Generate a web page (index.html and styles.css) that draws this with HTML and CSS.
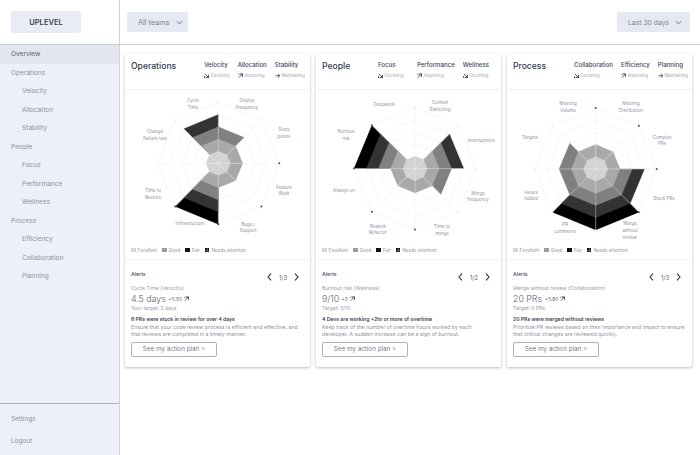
FILE: index.html
```html
<!DOCTYPE html>
<html lang="en">
<head>
<meta charset="utf-8">
<title>Uplevel</title>
<link rel="stylesheet" href="styles.css">
</head>
<body>
<svg class="defs" width="0" height="0" aria-hidden="true">
  <symbol id="i-down" viewBox="0 0 6 6"><path d="M1 1L5 5M5 1.8V5H1.8M0.6 3.4V5.4" fill="none" stroke="#22283a" stroke-width="0.9"/></symbol>
  <symbol id="i-up" viewBox="0 0 6 6"><path d="M1 5L5 1M1.8 1H5V4.2M0.8 1V2" fill="none" stroke="#22283a" stroke-width="0.9"/></symbol>
  <symbol id="i-flat" viewBox="0 0 6 6"><path d="M0.6 3H5.2M3.2 1L5.2 3L3.2 5" fill="none" stroke="#22283a" stroke-width="0.8"/></symbol>
  <symbol id="i-chev" viewBox="0 0 10 6"><path d="M1 0.8L5 5L9 0.8" fill="none" stroke="currentColor" stroke-width="1"/></symbol>
  <symbol id="i-left" viewBox="0 0 5 8"><path d="M4 0.6L1 4L4 7.4" fill="none" stroke="currentColor" stroke-width="1.1"/></symbol>
  <symbol id="i-right" viewBox="0 0 5 8"><path d="M1 0.6L4 4L1 7.4" fill="none" stroke="currentColor" stroke-width="1.1"/></symbol>
</svg>
<div class="app">
  <aside class="sidebar">
    <div class="brand"><div class="logo">UPLEVEL</div></div>
    <nav class="nav">
      <a class="nav-item active">Overview</a>
      <a class="nav-item">Operations</a>
      <a class="nav-item sub">Velocity</a>
      <a class="nav-item sub">Allocation</a>
      <a class="nav-item sub">Stability</a>
      <a class="nav-item">People</a>
      <a class="nav-item sub">Focus</a>
      <a class="nav-item sub">Performance</a>
      <a class="nav-item sub">Wellness</a>
      <a class="nav-item">Process</a>
      <a class="nav-item sub">Efficiency</a>
      <a class="nav-item sub">Collaboration</a>
      <a class="nav-item sub">Planning</a>
    </nav>
    <div class="side-foot">
      <a class="foot-item">Settings</a>
      <a class="foot-item">Logout</a>
    </div>
  </aside>
  <main class="main">
    <header class="topbar">
      <button class="select select-teams">All teams <svg class="chev"><use href="#i-chev"/></svg></button>
      <button class="select select-range">Last 30 days <svg class="chev"><use href="#i-chev"/></svg></button>
    </header>
    <div class="cards">

      <section class="card">
        <div class="card-head">
          <h2 class="card-title">Operations</h2>
          <div class="metric"><div class="metric-name">Velocity</div><div class="metric-status"><svg class="trend"><use href="#i-down"/></svg>Declining</div></div>
          <div class="metric"><div class="metric-name">Allocation</div><div class="metric-status"><svg class="trend"><use href="#i-up"/></svg>Improving</div></div>
          <div class="metric"><div class="metric-name">Stability</div><div class="metric-status"><svg class="trend"><use href="#i-flat"/></svg>Maintaining</div></div>
        </div>
        <div class="chart">
          <svg class="radar" viewBox="125 90 185 155">
            <g class="radar-shape" data-cx="218.3" data-cy="163.3" data-levels="3,2,2,2,5,1,1,4" data-dots="2,3,4,5"></g>
            <g class="radar-labels">
              <text x="193" y="102">Cycle</text><text x="193" y="108.5">Time</text>
              <text x="247" y="102">Deploy</text><text x="247" y="108.5">Frequency</text>
              <text x="284" y="131">Story</text><text x="284" y="138">points</text>
              <text x="155" y="133">Change</text><text x="155" y="140">Failure rate</text>
              <text x="284" y="188.5">Feature</text><text x="284" y="195">Work</text>
              <text x="153" y="192">Time to</text><text x="153" y="199">Restore</text>
              <text x="190" y="225">Infrastructure</text>
              <text x="248" y="225.5">Bugs /</text><text x="248" y="232">Support</text>
            </g>
          </svg>
          <div class="legend">
            <span class="key"><i class="swatch excellent"></i>Excellent</span>
            <span class="key"><i class="swatch good"></i>Good</span>
            <span class="key"><i class="swatch fair"></i>Fair</span>
            <span class="key"><i class="swatch attention"></i>Needs attention</span>
          </div>
        </div>
        <div class="alerts">
          <div class="alerts-head">
            <span class="alerts-title">Alerts</span>
            <div class="pager"><svg class="pager-arrow"><use href="#i-left"/></svg><span>1/3</span><svg class="pager-arrow"><use href="#i-right"/></svg></div>
          </div>
          <div class="alert-name">Cycle Time (Velocity)</div>
          <div class="alert-value">4.5 days <small>+%50</small><svg class="trend"><use href="#i-up"/></svg></div>
          <div class="alert-target">Your target: 2 days</div>
          <div class="alert-headline">8 PRs were stuck in review for over 4 days</div>
          <p class="alert-text">Ensure that your code review process is efficient and effective, and<br>that reviews are completed in a timely manner.</p>
          <button class="action">See my action plan &gt;</button>
        </div>
      </section>

      <section class="card">
        <div class="card-head card-head-people">
          <h2 class="card-title">People</h2>
          <div class="metric metric-focus"><div class="metric-name">Focus</div><div class="metric-status"><svg class="trend"><use href="#i-down"/></svg>Declining</div></div>
          <div class="metric"><div class="metric-name">Performance</div><div class="metric-status"><svg class="trend"><use href="#i-up"/></svg>Improving</div></div>
          <div class="metric"><div class="metric-name">Wellness</div><div class="metric-status"><svg class="trend"><use href="#i-down"/></svg>Declining</div></div>
        </div>
        <div class="chart">
          <svg class="radar" viewBox="316 90 185 155">
            <g class="radar-shape" data-cx="415" data-cy="168.5" data-levels="1,4,3,2,2,2,5,1" data-dots="4,5,6,7"></g>
            <g class="radar-labels">
              <text x="384" y="106">Deepwork</text>
              <text x="440" y="104">Context</text><text x="440" y="110.5">Switching</text>
              <text x="481" y="142">Interruptions</text>
              <text x="346" y="133">Burnout</text><text x="346" y="140">risk</text>
              <text x="344" y="192">Always on</text>
              <text x="478" y="195">Merge</text><text x="478" y="201">frequency</text>
              <text x="378" y="228">Rework</text><text x="378" y="234">Refactor</text>
              <text x="442" y="228">Time to</text><text x="442" y="235">merge</text>
            </g>
          </svg>
          <div class="legend">
            <span class="key"><i class="swatch excellent"></i>Excellent</span>
            <span class="key"><i class="swatch good"></i>Good</span>
            <span class="key"><i class="swatch fair"></i>Fair</span>
            <span class="key"><i class="swatch attention"></i>Needs attention</span>
          </div>
        </div>
        <div class="alerts">
          <div class="alerts-head">
            <span class="alerts-title">Alerts</span>
            <div class="pager"><svg class="pager-arrow"><use href="#i-left"/></svg><span>1/2</span><svg class="pager-arrow"><use href="#i-right"/></svg></div>
          </div>
          <div class="alert-name">Burnout risk (Wellness)</div>
          <div class="alert-value">9/10 <small>+3</small><svg class="trend"><use href="#i-up"/></svg></div>
          <div class="alert-target">Target: 5/10</div>
          <div class="alert-headline">4 Devs are working +2hr or more of overtime</div>
          <p class="alert-text">Keep track of the number of overtime hours worked by each<br>developer. A sudden increase can be a sign of burnout.</p>
          <button class="action">See my action plan &gt;</button>
        </div>
      </section>

      <section class="card">
        <div class="card-head card-head-process">
          <h2 class="card-title">Process</h2>
          <div class="metric"><div class="metric-name">Collaboration</div><div class="metric-status"><svg class="trend"><use href="#i-down"/></svg>Declining</div></div>
          <div class="metric"><div class="metric-name">Efficiency</div><div class="metric-status"><svg class="trend"><use href="#i-up"/></svg>Improving</div></div>
          <div class="metric"><div class="metric-name">Planning</div><div class="metric-status"><svg class="trend"><use href="#i-flat"/></svg>Maintaining</div></div>
        </div>
        <div class="chart">
          <svg class="radar" viewBox="507 90 185 155">
            <g class="radar-shape" data-cx="595.7" data-cy="169" data-levels="2,2,4,5,5,3,3,2" data-dots="0,1,2,3"></g>
            <g class="radar-labels">
              <text x="568" y="105">Meeting</text><text x="568" y="112">Volume</text>
              <text x="631" y="105">Meeting</text><text x="631" y="112">Distribution</text>
              <text x="662" y="139">Complex</text><text x="662" y="145">PRs</text>
              <text x="530" y="139">Targets</text>
              <text x="664" y="199.5">Stuck PRs</text>
              <text x="531" y="194">Issues</text><text x="531" y="200">Added</text>
              <text x="565" y="226">PR</text><text x="565" y="233">comments</text>
              <text x="630" y="225">Merge</text><text x="630" y="232">without</text><text x="630" y="239">review</text>
            </g>
          </svg>
          <div class="legend">
            <span class="key"><i class="swatch excellent"></i>Excellent</span>
            <span class="key"><i class="swatch good"></i>Good</span>
            <span class="key"><i class="swatch fair"></i>Fair</span>
            <span class="key"><i class="swatch attention"></i>Needs attention</span>
          </div>
        </div>
        <div class="alerts">
          <div class="alerts-head">
            <span class="alerts-title">Alerts</span>
            <div class="pager"><svg class="pager-arrow"><use href="#i-left"/></svg><span>1/3</span><svg class="pager-arrow"><use href="#i-right"/></svg></div>
          </div>
          <div class="alert-name">Merge without review (Collaboration)</div>
          <div class="alert-value">20 PRs <small>+%80</small><svg class="trend"><use href="#i-up"/></svg></div>
          <div class="alert-target">Target: 5 PRs</div>
          <div class="alert-headline">20 PRs were merged without reviews</div>
          <p class="alert-text">Prioritize PR reviews based on their importance and impact to ensure<br>that critical changes are reviewed quickly.</p>
          <button class="action">See my action plan &gt;</button>
        </div>
      </section>

    </div>
  </main>
</div>
<script src="app.js"></script>
</body>
</html>
```
FILE: styles.css
```css
* { box-sizing: border-box; }
html, body { margin: 0; padding: 0; height: 100%; }
body { font-family: Inter, "Liberation Sans", sans-serif; color: #8b90a1; background: #fff; overflow: hidden; }
.defs { position: absolute; }
.app { display: flex; height: 455px; }

.sidebar { width: 120px; flex: none; display: flex; flex-direction: column; border-right: 1.5px solid #cfd2d9; }
.brand { height: 45px; flex: none; padding: 11px; border-bottom: 1.5px solid #c9ccd2; }
.logo { width: 70px; height: 22px; background: #e9ecf5; border-radius: 2px; display: flex; align-items: center; justify-content: center; font-size: 7.4px; font-weight: 600; color: #3a3f4d; letter-spacing: .1px; }
.nav { flex: 1; background: #edf0f9; }
.nav-item { display: block; height: 18.5px; line-height: 18.5px; padding-left: 11px; font-size: 6.6px; color: #8e92a1; }
.nav-item.sub { padding-left: 22px; }
.nav-item.active { background: #e3e6ef; color: #595e6e; }
.side-foot { flex: none; height: 52px; padding-top: 4px; background: #edf0f9; border-top: 1px solid #aeb1b8; }
.foot-item { display: block; height: 22px; line-height: 22px; padding-left: 11px; font-size: 6.4px; color: #8e92a1; }

.main { flex: 1; min-width: 0; }
.topbar { height: 45px; display: flex; justify-content: space-between; padding: 12px 10px 12px 7px; border-bottom: 1.5px solid #c9ccd2; }
.select { height: 20px; border: 0; border-radius: 2px; background: #e6e9f3; color: #7d8294; font: 400 6.8px Inter, sans-serif; display: flex; align-items: center; padding: 0 0 0 11px; }
.select-teams { width: 61px; font-size: 7.3px; }
.select-range { width: 73px; }
.chev { width: 7px; height: 5px; margin-left: 6px; color: #4a4f60; }
.select-range .chev { margin-left: 6px; }

.cards { display: flex; gap: 6px; padding: 9px 0 0 5px; }
.card { width: 185px; height: 313px; flex: none; background: #fff; border-radius: 2px; box-shadow: 0 1px 3px rgba(60,60,70,.35); }
.card-head { height: 36px; display: flex; align-items: flex-start; gap: 8px; padding: 7px 5px 0 6px; border-bottom: 1px solid #f1f2f5; }
.card-head-people { padding-right: 12px; }
.card-head-process { padding-right: 4px; }
.card-title { margin: 0 auto 0 0; font-size: 8.6px; line-height: 10px; font-weight: 500; color: #2e3a52; }
.metric-focus { width: 31px; }
.metric-name { font-size: 6.1px; line-height: 8px; font-weight: 500; color: #3e4660; white-space: nowrap; }
.metric-status { display: flex; align-items: center; margin-top: 4px; font-size: 4.3px; line-height: 6px; color: #a0a4b2; white-space: nowrap; }
.trend { width: 5.5px; height: 5.5px; margin-right: 1.2px; flex: none; }

.chart { height: 170px; border-bottom: 1px solid #f1f2f5; }
.radar { display: block; width: 185px; height: 155px; }
.radar-labels text { font-size: 4.5px; fill: #8d91a4; text-anchor: middle; }
.legend { display: flex; padding: 0 6px; gap: 5px; height: 10px; align-items: center; font-size: 4.6px; color: #9195a5; }
.key { display: flex; align-items: center; }
.swatch { width: 4.5px; height: 4.5px; margin-right: 2px; }
.excellent { background: #d6d6d6; }
.good { background: #9c9c9c; }
.fair { background: linear-gradient(#111 40%, #777 40%, #777 60%, #111 60%); }
.attention { background: linear-gradient(#555, #555) center / 1px 100% no-repeat, linear-gradient(#555, #555) center / 100% 1px no-repeat, #111; }

.alerts { padding: 11px 6px 0; }
.alerts-head { height: 13px; display: flex; justify-content: space-between; }
.alerts-title { font-size: 5.2px; line-height: 7px; font-weight: 500; color: #4a5068; }
.pager { display: flex; align-items: center; height: 12px; gap: 7px; padding-right: 5px; font-size: 5.8px; color: #5b6072; }
.pager-arrow { width: 5px; height: 8px; color: #2a2f40; }
.alert-name { font-size: 5.25px; line-height: 9px; color: #9a9eae; }
.alert-value { display: flex; align-items: center; height: 11px; font-size: 8.8px; font-weight: 300; color: #5a5f72; white-space: pre; }
.alert-value small { font-size: 4.8px; font-weight: 400; margin-right: 2px; }
.alert-target { font-size: 5.1px; line-height: 8px; color: #9a9eae; }
.alert-headline { margin-top: 3px; font-size: 5.1px; line-height: 8px; font-weight: 600; color: #3c4154; }
.alert-text { margin: 1px 0 0; font-size: 5.25px; line-height: 7px; color: #9094a4; white-space: nowrap; }
.action { display: block; margin-top: 3.5px; width: 86px; height: 15px; padding: 0; background: #fff; border: 1px solid #aeb2bd; border-radius: 2px; font: 400 6.3px Inter, sans-serif; color: #777c8d; }
```
FILE: app.js
```js
// Draws each radar: one wedge per pair of neighbouring axes, filled up to its level.
var NS = 'http://www.w3.org/2000/svg';
var STEP = 12.2;
var BANDS = ['#d2d2d2', '#a9a9a9', '#808080', '#333333', '#000000'];

function point(cx, cy, axis, radius) {
  var a = axis * Math.PI / 4;
  return [cx + Math.sin(a) * radius, cy - Math.cos(a) * radius];
}
function add(parent, tag, attrs) {
  var el = document.createElementNS(NS, tag);
  Object.keys(attrs).forEach(function (k) { el.setAttribute(k, attrs[k]); });
  parent.appendChild(el);
}
function ring(cx, cy, radius) {
  var pts = [];
  for (var i = 0; i < 8; i++) pts.push(point(cx, cy, i, radius).join(','));
  return pts.join(' ');
}

document.querySelectorAll('.radar-shape').forEach(function (g) {
  var cx = +g.dataset.cx, cy = +g.dataset.cy;
  var levels = g.dataset.levels.split(',').map(Number);
  var dots = g.dataset.dots.split(',').map(Number);
  var i, k;

  for (k = 1; k <= 5; k++) {
    add(g, 'polygon', { points: ring(cx, cy, STEP * k), fill: 'none', stroke: '#eceef6', 'stroke-width': 0.6 });
  }
  for (i = 0; i < 8; i++) {
    var end = point(cx, cy, i, STEP * 5);
    add(g, 'line', { x1: cx, y1: cy, x2: end[0], y2: end[1], stroke: '#eceef6', 'stroke-width': 0.6 });
  }
  for (k = 5; k >= 1; k--) {
    for (i = 0; i < 8; i++) {
      if (levels[i] < k) continue;
      var a = point(cx, cy, i, STEP * k), b = point(cx, cy, i + 1, STEP * k);
      add(g, 'polygon', {
        points: cx + ',' + cy + ' ' + a.join(',') + ' ' + b.join(','),
        fill: BANDS[k - 1], stroke: BANDS[k - 1], 'stroke-width': 0.2
      });
    }
  }
  for (i = 0; i < 8; i++) {
    var tip = point(cx, cy, i, STEP * 5);
    add(g, 'line', { x1: cx, y1: cy, x2: tip[0], y2: tip[1], stroke: '#ffffff', 'stroke-opacity': 0.55, 'stroke-width': 0.7 });
    var on = dots.indexOf(i) >= 0;
    add(g, 'circle', { cx: tip[0], cy: tip[1], r: on ? 1 : 0.8, fill: on ? '#3c4a80' : '#e6e8f2' });
  }
});
```
